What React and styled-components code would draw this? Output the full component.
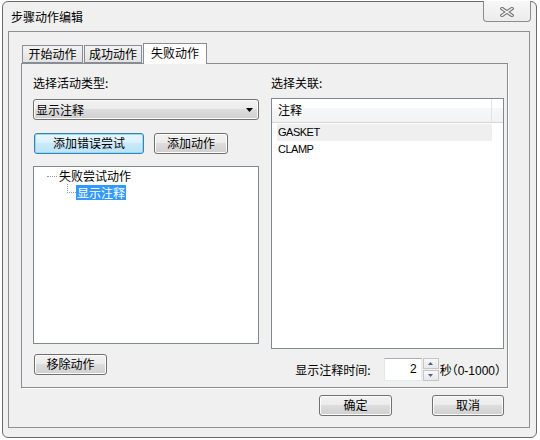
import styled, { createGlobalStyle } from 'styled-components';

const GlobalStyle = createGlobalStyle`
  html, body {
    margin: 0;
    padding: 0;
    background: #ffffff;
  }
  body {
    font-family: "Noto Sans CJK SC", "Liberation Sans", sans-serif;
    font-size: 12px;
    color: #000000;
  }
  * {
    box-sizing: border-box;
  }
`;

// Janela do diálogo
const Screen = styled.div`
  width: 540px;
  height: 440px;
  padding: 1px 0 0 2px;
`;

const Window = styled.div`
  width: 535px;
  height: 437px;
  border: 1px solid #6b6b6b;
  border-radius: 6px;
  background: #f0f0f0;
  display: flex;
  flex-direction: column;
  padding: 0 6px 9px 5px;
`;

const TitleBar = styled.div`
  height: 29px;
  flex: none;
  display: flex;
  align-items: flex-start;
  justify-content: space-between;
`;

const Title = styled.div`
  padding: 7px 0 0 3px;
  line-height: 16px;
`;

const CloseButton = styled.div`
  width: 48px;
  height: 21px;
  margin: -1px -1px 0 0;
  border: 1px solid #8c8c8c;
  border-top: none;
  border-radius: 0 0 4px 4px;
  background: linear-gradient(#f7f7f7, #ececec);
  display: flex;
  align-items: center;
  justify-content: center;
  padding-top: 1px;
`;

const Client = styled.div`
  flex: 1;
  border: 1px solid #8e8f8f;
  display: flex;
  flex-direction: column;
`;

// Abas
const TabStrip = styled.div`
  height: 20px;
  margin: 11px 0 0 13px;
  display: flex;
  align-items: flex-end;
  gap: 1px;
`;

const Tab = styled.div`
  width: ${(p) => p.$w}px;
  height: ${(p) => (p.$active ? 21 : 18)}px;
  margin-bottom: ${(p) => (p.$active ? -1 : 0)}px;
  position: relative;
  z-index: ${(p) => (p.$active ? 1 : 0)};
  border: 1px solid #898c95;
  border-bottom: ${(p) => (p.$active ? 'none' : '1px solid #898c95')};
  background: ${(p) => (p.$active ? '#ffffff' : 'linear-gradient(#f2f2f2, #e3e3e3)')};
  text-align: center;
  line-height: ${(p) => (p.$active ? 17 : 16)}px;
`;

const Panel = styled.div`
  height: 325px;
  margin: 0 21px 0 12px;
  border: 1px solid #898c95;
  box-shadow: 1px 1px 0 #ffffff;
  padding: 11px 3px 0 11px;
  display: grid;
  grid-template-columns: 226px 233px;
  column-gap: 12px;
  align-items: start;
`;

const Column = styled.div`
  display: flex;
  flex-direction: column;
`;

const Label = styled.div`
  height: 16px;
  line-height: 16px;
`;

// Caixa de combinação
const Combo = styled.div`
  margin-top: 8px;
  height: 21px;
  border: 1px solid #707070;
  border-radius: 3px;
  background: linear-gradient(#f2f2f2 0%, #ebebeb 49%, #dddddd 50%, #cfcfcf 100%);
  box-shadow: inset 0 0 0 1px #fcfcfc;
  display: flex;
  align-items: center;
  justify-content: space-between;
  padding: 0 5px 0 2px;
  line-height: 17px;
`;

const ButtonRow = styled.div`
  margin-top: ${(p) => p.$top || 0}px;
  display: flex;
  gap: 10px;
  padding-left: 1px;
`;

const Button = styled.div`
  width: ${(p) => p.$w}px;
  height: 21px;
  border: 1px solid ${(p) => (p.$focused ? '#3c7fb1' : '#707070')};
  border-radius: 3px;
  background: ${(p) =>
    p.$focused
      ? 'linear-gradient(#eaf6fd 0%, #d9f0fc 49%, #c8e9fa 50%, #bde3f7 100%)'
      : 'linear-gradient(#f2f2f2 0%, #ebebeb 49%, #dddddd 50%, #cfcfcf 100%)'};
  box-shadow: inset 0 0 0 1px ${(p) => (p.$focused ? '#8fdcf8' : '#fcfcfc')};
  text-align: center;
  line-height: 18px;
`;

// Árvore
const Tree = styled.div`
  margin-top: 12px;
  height: 178px;
  border: 1px solid #828790;
  background: #ffffff;
  padding-top: 1px;
`;

const TreeRow = styled.div`
  height: 16px;
  display: flex;
  align-items: flex-start;
  padding-left: ${(p) => p.$indent}px;
`;

const Connector = styled.span`
  width: ${(p) => p.$w}px;
  height: 9px;
  border-bottom: 1px dotted #9a9a9a;
  border-left: ${(p) => (p.$child ? '1px dotted #9a9a9a' : 'none')};
`;

const TreeLabel = styled.span`
  line-height: 15px;
  padding: 0 1px;
  margin: ${(p) => (p.$selected ? '1px 0 0 0' : '0 0 0 1px')};
  background: ${(p) => (p.$selected ? '#3399ff' : 'transparent')};
  color: ${(p) => (p.$selected ? '#ffffff' : '#000000')};
`;

// Lista
const List = styled.div`
  margin-top: 7px;
  height: 251px;
  border: 1px solid #828790;
  background: #ffffff;
`;

const ListHeader = styled.div`
  height: 24px;
  display: flex;
  border-bottom: 1px solid #d5d5d5;
  background: linear-gradient(#ffffff 0%, #ffffff 40%, #f6f7f8 41%, #f2f3f5 100%);
`;

const HeaderCell = styled.div`
  width: 220px;
  border-right: 1px solid #dfe2e7;
  padding-left: 6px;
  line-height: 22px;
`;

const ListBody = styled.div`
  padding: 1px 0 0 5px;
`;

const ListRow = styled.div`
  width: 215px;
  height: 17px;
  padding-left: 1px;
  line-height: 17px;
  font-family: "Liberation Sans", sans-serif;
  font-size: 11px;
  letter-spacing: -0.5px;
  background: ${(p) => (p.$selected ? '#efefef' : 'transparent')};
`;

// Campo numérico
const SpinRow = styled.div`
  margin-top: 9px;
  height: 23px;
  display: flex;
  align-items: center;
  justify-content: flex-end;
  padding-right: 3px;
`;

const SpinInput = styled.div`
  width: 38px;
  height: 23px;
  margin-left: 13px;
  border: 1px solid #e3e9ef;
  border-top-color: #abadb3;
  background: #ffffff;
  text-align: right;
  padding-right: 4px;
  font-family: "Liberation Sans", sans-serif;
  font-size: 12px;
  line-height: 21px;
`;

const SpinButtons = styled.div`
  width: 16px;
  height: 23px;
  margin-left: 1px;
  display: flex;
  flex-direction: column;
  gap: 1px;
`;

const SpinHalf = styled.div`
  flex: 1;
  border: 1px solid #c5c5c5;
  background: linear-gradient(#f7f7f7, #e8e8e8);
  display: flex;
  align-items: center;
  justify-content: center;
`;

const Suffix = styled.span`
  margin-left: 1px;
  font-family: "Liberation Sans", "Noto Sans CJK SC", sans-serif;
  font-feature-settings: "halt";
`;

const Footer = styled.div`
  margin-top: 7px;
  display: flex;
  justify-content: flex-end;
  gap: 40px;
  padding-right: 25px;
`;

const Arrow = ({ up, w = 7, h = 4, color = '#000' }) => (
  <svg width={w} height={h} viewBox={`0 0 ${w} ${h}`}>
    <polygon
      points={up ? `0,${h} ${w},${h} ${w / 2},0` : `0,0 ${w},0 ${w / 2},${h}`}
      fill={color}
    />
  </svg>
);

const App = () => {
  return (
    <>
      <GlobalStyle />
      <Screen>
        <Window>
          <TitleBar>
            <Title>步骤动作编辑</Title>
            <CloseButton>
              <svg width="14" height="10" viewBox="0 0 14 10">
                <path d="M2 1.5 L12 8.5 M12 1.5 L2 8.5" stroke="#707070" strokeWidth="3.4" strokeLinecap="square" />
                <path d="M2 1.5 L12 8.5 M12 1.5 L2 8.5" stroke="#f4f4f4" strokeWidth="1.4" strokeLinecap="square" />
              </svg>
            </CloseButton>
          </TitleBar>
          <Client>
            <TabStrip>
              <Tab $w={61}>开始动作</Tab>
              <Tab $w={58}>成功动作</Tab>
              <Tab $w={64} $active>失败动作</Tab>
            </TabStrip>
            <Panel>
              <Column>
                <Label>选择活动类型:</Label>
                <Combo>
                  <span>显示注释</span>
                  <Arrow />
                </Combo>
                <ButtonRow $top={13}>
                  <Button $w={110} $focused>添加错误尝试</Button>
                  <Button $w={74}>添加动作</Button>
                </ButtonRow>
                <Tree>
                  <TreeRow $indent={13}>
                    <Connector $w={10} />
                    <TreeLabel>失败尝试动作</TreeLabel>
                  </TreeRow>
                  <TreeRow $indent={33}>
                    <Connector $w={9} $child />
                    <TreeLabel $selected>显示注释</TreeLabel>
                  </TreeRow>
                </Tree>
                <ButtonRow $top={10}>
                  <Button $w={73}>移除动作</Button>
                </ButtonRow>
              </Column>
              <Column>
                <Label>选择关联:</Label>
                <List>
                  <ListHeader>
                    <HeaderCell>注释</HeaderCell>
                  </ListHeader>
                  <ListBody>
                    <ListRow $selected>GASKET</ListRow>
                    <ListRow>CLAMP</ListRow>
                  </ListBody>
                </List>
                <SpinRow>
                  <span>显示注释时间:</span>
                  <SpinInput>2</SpinInput>
                  <SpinButtons>
                    <SpinHalf><Arrow up w={5} h={3} color="#4a5f80" /></SpinHalf>
                    <SpinHalf><Arrow w={5} h={3} color="#4a5f80" /></SpinHalf>
                  </SpinButtons>
                  <Suffix>秒（0-1000）</Suffix>
                </SpinRow>
              </Column>
            </Panel>
            <Footer>
              <Button $w={73}>确定</Button>
              <Button $w={72}>取消</Button>
            </Footer>
          </Client>
        </Window>
      </Screen>
    </>
  );
};

export default App;
